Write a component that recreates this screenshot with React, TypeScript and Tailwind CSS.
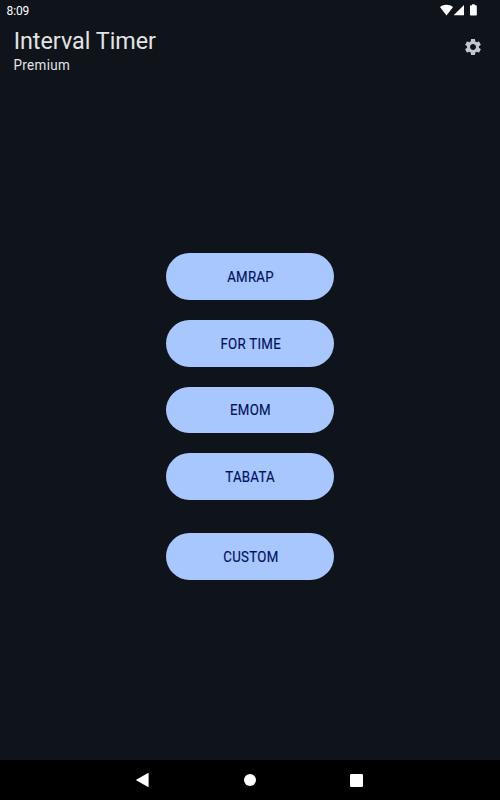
import React from 'react';

const modes = ['AMRAP', 'FOR TIME', 'EMOM', 'TABATA', 'CUSTOM'];

function ModeButton({ label }: { label: string }) {
  return (
    <button
      type="button"
      className="flex h-[46.67px] w-[167.3px] items-center justify-center rounded-full bg-[#a8c7ff] pt-[2.4px] text-[13.8px] leading-none font-normal tracking-[0.3px] text-[#00105c] [-webkit-text-stroke:0.15px_#00105c] last:mt-[13.33px]"
    >
      <span className="inline-block scale-x-[0.96] pl-[1.2px]">{label}</span>
    </button>
  );
}

function StatusBar() {
  return (
    <div className="flex h-5 shrink-0 items-center justify-between pr-[22px] pl-[6.5px] text-white">
      <span className="pt-px text-[12px] leading-5 tracking-[-0.1px]">8:09</span>
      <svg width="38" height="12" viewBox="0 0 38 12" fill="currentColor" aria-hidden="true">
        <path d="M0 3.1C3.7 .1 9.3 .1 13 3.1L6.5 11.4Z" />
        <path d="M24 1V11.2H13.7Z" />
        <path d="M32.1.3h2.6v1h1.3q.8 0 .8.8v8.6q0 .8-.8.8h-5.2q-.8 0-.8-.8V2.1q0-.8.8-.8h1.3Z" />
      </svg>
    </div>
  );
}

export default function App() {
  return (
    <div className="flex h-[800px] w-[500px] flex-col overflow-hidden bg-[#0f141a] font-[Roboto,sans-serif]">
      <StatusBar />
      <header className="flex h-[53.33px] shrink-0 justify-between pr-[16.6px] pl-[13.33px] text-[#e2e3e5]">
        <div className="pt-[7px]">
          <h1 className="origin-left scale-x-[0.94] pl-[0.7px] text-[24.8px] leading-[28px] font-normal">Interval Timer</h1>
          <p className="origin-left scale-x-[0.96] pl-[0.5px] text-[14px] leading-[20px] tracking-[0.35px]">Premium</p>
        </div>
        <button type="button" aria-label="Settings" className="mt-[16.7px] size-5 text-[#c1c7ce]">
          <svg viewBox="0 0 24 24" fill="currentColor" className="size-5" aria-hidden="true">
            <path d="M19.14 12.94c.04-.3.06-.61.06-.94 0-.32-.02-.64-.07-.94l2.03-1.58c.18-.14.23-.41.12-.61l-1.92-3.32c-.12-.22-.37-.29-.59-.22l-2.39.96c-.5-.38-1.03-.7-1.62-.94l-.36-2.54c-.04-.24-.24-.41-.48-.41h-3.84c-.24 0-.43.17-.47.41l-.36 2.54c-.59.24-1.13.57-1.62.94l-2.39-.96c-.22-.08-.47 0-.59.22L2.74 8.87c-.12.21-.08.47.12.61l2.03 1.58c-.05.3-.09.63-.09.94s.02.64.07.94l-2.03 1.58c-.18.14-.23.41-.12.61l1.92 3.32c.12.22.37.29.59.22l2.39-.96c.5.38 1.03.7 1.62.94l.36 2.54c.05.24.24.41.48.41h3.84c.24 0 .44-.17.47-.41l.36-2.54c.59-.24 1.13-.56 1.62-.94l2.39.96c.22.08.47 0 .59-.22l1.92-3.32c.12-.22.07-.47-.12-.61l-2.01-1.58zM12 15.6c-1.98 0-3.6-1.62-3.6-3.6s1.62-3.6 3.6-3.6 3.6 1.62 3.6 3.6-1.62 3.6-3.6 3.6z" />
          </svg>
        </button>
      </header>
      <main className="flex flex-1 flex-col items-center justify-center gap-5">
        {modes.map((label) => (
          <ModeButton key={label} label={label} />
        ))}
      </main>
      <nav className="flex h-10 shrink-0 justify-center bg-black text-white">
        <div className="grid w-[320px] grid-cols-3 place-items-center">
          <svg width="14" height="14" viewBox="0 0 14 14" fill="currentColor" aria-label="Back">
            <path d="M.6 6.6 12 .1q.6-.3.6.4v13q0 .7-.6.4L.6 7.4Q0 7 .6 6.6Z" />
          </svg>
          <span className="size-[12.4px] rounded-full bg-white" />
          <span className="size-[13px] rounded-[1.3px] bg-white" />
        </div>
      </nav>
    </div>
  );
}
